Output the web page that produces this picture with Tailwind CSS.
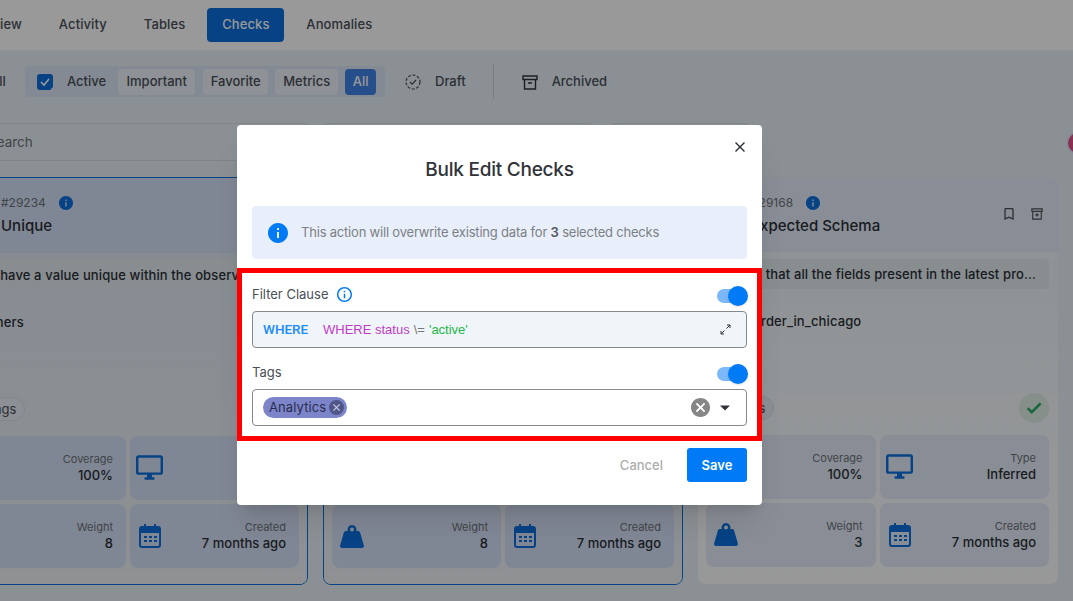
<!doctype html>
<html lang="en">
  <head>
    <meta charset="UTF-8" />
    <title>Bulk Edit Checks</title>
    <script src="https://cdn.jsdelivr.net/npm/@tailwindcss/browser@4"></script>
  </head>
  <body class="relative h-[601px] w-[1073px] overflow-hidden bg-[#e8f1f7] font-['Inter',sans-serif] text-[#2b2f36]">
    <!-- page behind the dialog -->
    <nav class="flex h-[50px] items-start gap-[37px] bg-white pt-2 pl-[24px] text-[13px] font-medium tracking-[0.1px] text-[#4a4f57]">
      <div class="-ml-[62px] flex h-[34px] items-center">Overview</div>
      <div class="flex h-[34px] items-center">Activity</div>
      <div class="flex h-[34px] items-center">Tables</div>
      <div class="-mx-[15px] flex h-[34px] w-[77px] items-center justify-center rounded bg-[#0a6fdc] text-white">Checks</div>
      <div class="flex h-[34px] items-center">Anomalies</div>
    </nav>

    <section class="flex h-[73px] items-center pb-[10px] text-[13px] font-medium text-[#4a4f57]">
      <span class="-ml-[10px] w-[35px]">All</span>
      <div class="flex h-[31px] w-[360px] items-center rounded bg-[#dbe6f5] pl-3">
        <svg class="size-[16px] text-[#0a6fdc]" viewBox="0 0 16 16" fill="currentColor"><path d="M3 0h10a3 3 0 0 1 3 3v10l-3 3H3a3 3 0 0 1-3-3V3a3 3 0 0 1 3-3z" /><path d="m4 8 3 3 5-6" fill="none" stroke="#fff" stroke-width="1.6" /></svg>
        <span class="ml-[14px]">Active</span>
        <span class="ml-[12px] flex h-[26px] w-[77px] items-center justify-center rounded bg-[#edf3fa]">Important</span>
        <span class="ml-[8px] flex h-[26px] w-[65px] items-center justify-center rounded bg-[#edf3fa]">Favorite</span>
        <span class="ml-[7px] flex h-[26px] w-[63px] items-center justify-center rounded bg-[#edf3fa]">Metrics</span>
        <span class="ml-[7px] flex h-[26px] w-[31px] items-center justify-center rounded bg-[#3f82e6] text-white">All</span>
      </div>
      <svg class="ml-[20px] size-[16px]" viewBox="0 0 16 16" fill="none" stroke="#4a4f57" stroke-width="1.2"><circle cx="8" cy="8" r="7" stroke-dasharray="3 1.6" /><path d="m5 8 2.2 2.2L11 6" /></svg>
      <span class="ml-[14px]">Draft</span>
      <div class="ml-[27px] h-[35px] w-px bg-[#c9d2da]"></div>
      <svg class="ml-[28px] size-[16px]" viewBox="0 0 16 16" fill="none" stroke="#30343a" stroke-width="1.4"><path d="M1 2h14v3.5H1zM2.5 5.5V15h11V5.5M6 9h4" /></svg>
      <span class="ml-[14px]">Archived</span>
    </section>

    <section class="flex gap-[17px] pb-[16px] text-[13.5px] text-[#6d7278]">
      <div class="-ml-[52px] flex h-[38px] w-[359px] items-center rounded border border-[#d5dde3] pl-[39px]">Search</div>
      <div class="h-[38px] w-[269px] rounded border border-[#d5dde3]"></div>
      <div class="h-[38px] w-[140px] rounded border border-[#d5dde3]"></div>
    </section>

    <!-- check cards -->
    <main class="-ml-[52px] flex gap-[15px]">
      <article class="h-[408px] w-[360px] shrink-0 overflow-hidden rounded-lg border border-[#0a6fdc]">
        <header class="h-[75px] bg-[#d5e1f7] pt-[16px] pl-[52px]">
          <p class="flex items-center gap-[13px] text-[12px] text-[#6d7278]">#29234
            <svg class="size-[14px] text-[#0a6fdc]" viewBox="2 2 20 20" fill="currentColor"><path d="M12 2C6.48 2 2 6.48 2 12s4.48 10 10 10 10-4.48 10-10S17.52 2 12 2zm1 15h-2v-6h2v6zm0-8h-2V7h2v2z" /></svg>
          </p>
          <h3 class="mt-[3px] text-[15px] font-medium">Unique</h3>
        </header>
        <div class="h-[332px] bg-linear-to-b from-[#e1eaf5] to-[#eef2f6] px-2 pt-[7px]">
          <p class="h-[30px] truncate rounded bg-[#e3ebf1] px-2 text-[13px] leading-[30px] font-medium tracking-[0.12px]">Must have a value unique within the observed data in this set of rows</p>
          <p class="mt-[23px] text-[13px] font-medium tracking-[0.12px]">customers</p>
          <div class="mt-[64px] flex h-[24px] items-center">
            <span class="ml-[1px] rounded-full border border-[#d7e0e8] bg-[#e9eff5] px-2 text-[13px] leading-[22px] text-[#4a4f57]">+2 Tags</span>
          </div>
          <div class="mt-[15px] grid grid-cols-2 gap-[4px]">
            <div class="flex h-[64px] items-center justify-end rounded-lg bg-[#d5e1f7] px-[13px]">
              <div class="mb-[2px] text-right"><p class="text-[11px] leading-[16px] text-[#6d7278]">Coverage</p><p class="text-[13px] leading-[16px] font-medium">100%</p></div>
            </div>
            <div class="flex h-[64px] items-center justify-between rounded-lg bg-[#d5e1f7] pr-[13px] pl-[6px]">
              <svg class="size-[27px] text-[#0a6fdc]" viewBox="1 2 22 20" fill="currentColor"><path d="M21 2H3c-1.100 0-2 .9-2 2v12c0 1.100.9 2 2 2h7v2H8v2h8v-2h-2v-2h7c1.100 0 2-.9 2-2V4c0-1.100-.9-2-2-2zm0 14H3V4h18v12z" /></svg>
              <div class="mb-[2px] text-right"><p class="text-[11px] leading-[16px] text-[#6d7278]">Type</p><p class="text-[13px] leading-[16px] font-medium">Inferred</p></div>
            </div>
            <div class="flex h-[64px] items-center justify-end rounded-lg bg-[#d5e1f7] px-[13px]">
              <div class="mb-[2px] text-right"><p class="text-[11px] leading-[16px] text-[#6d7278]">Weight</p><p class="text-[13px] leading-[16px] font-medium">8</p></div>
            </div>
            <div class="flex h-[64px] items-center justify-between rounded-lg bg-[#d5e1f7] pr-[13px] pl-[9px]">
              <svg class="h-[24px] w-[22px] text-[#0a6fdc]" viewBox="0 0 22 24" fill="currentColor"><path fill-rule="evenodd" d="M5 0h2v2h8V0h2v2h2a3 3 0 0 1 3 3v16a3 3 0 0 1-3 3H3a3 3 0 0 1-3-3V5a3 3 0 0 1 3-3h2zM2 9v12a1 1 0 0 0 1 1h16a1 1 0 0 0 1-1V9zm3 3h3v2H5zm5 0h3v2h-3zm5 0h3v2h-3zM5 16h3v2H5zm5 0h3v2h-3zm5 0h3v2h-3z" /></svg>
              <div class="mb-[2px] text-right"><p class="text-[11px] leading-[16px] text-[#6d7278]">Created</p><p class="text-[13px] leading-[16px] font-medium">7 months ago</p></div>
            </div>
          </div>
        </div>
      </article>

      <article class="h-[408px] w-[360px] shrink-0 overflow-hidden rounded-lg border border-[#0a6fdc]">
        <div class="h-[75px] bg-[#d5e1f7]"></div>
        <div class="h-[332px] bg-linear-to-b from-[#e1eaf5] to-[#eef2f6] px-2 pt-[183px]">
          <div class="grid grid-cols-2 gap-[4px]">
            <div class="h-[64px] rounded-lg bg-[#d5e1f7]"></div>
            <div class="h-[64px] rounded-lg bg-[#d5e1f7]"></div>
            <div class="flex h-[64px] items-center justify-between rounded-lg bg-[#d5e1f7] pr-[13px] pl-[8px]">
              <svg class="h-[23px] w-[24px] text-[#0a6fdc]" viewBox="0 0 24 23" fill="currentColor"><path fill-rule="evenodd" d="M12 0a4.500 4.500 0 0 1 4.200 6H18c1 0 1.800.6 2.100 1.500l3.800 13c.4 1.300-.5 2.500-1.900 2.500H2c-1.400 0-2.300-1.200-1.900-2.500l3.800-13C4.200 6.600 5 6 6 6h1.800A4.500 4.500 0 0 1 12 0zm0 2.500a2 2 0 1 0 0 4 2 2 0 0 0 0-4z" /></svg>
              <div class="mb-[2px] text-right"><p class="text-[11px] leading-[16px] text-[#6d7278]">Weight</p><p class="text-[13px] leading-[16px] font-medium">8</p></div>
            </div>
            <div class="flex h-[64px] items-center justify-between rounded-lg bg-[#d5e1f7] pr-[13px] pl-[9px]">
              <svg class="h-[24px] w-[22px] text-[#0a6fdc]" viewBox="0 0 22 24" fill="currentColor"><path fill-rule="evenodd" d="M5 0h2v2h8V0h2v2h2a3 3 0 0 1 3 3v16a3 3 0 0 1-3 3H3a3 3 0 0 1-3-3V5a3 3 0 0 1 3-3h2zM2 9v12a1 1 0 0 0 1 1h16a1 1 0 0 0 1-1V9zm3 3h3v2H5zm5 0h3v2h-3zm5 0h3v2h-3zM5 16h3v2H5zm5 0h3v2h-3zm5 0h3v2h-3z" /></svg>
              <div class="mb-[2px] text-right"><p class="text-[11px] leading-[16px] text-[#6d7278]">Created</p><p class="text-[13px] leading-[16px] font-medium">7 months ago</p></div>
            </div>
          </div>
        </div>
      </article>

      <article class="h-[407px] w-[360px] shrink-0 overflow-hidden rounded-lg">
        <header class="relative h-[75px] bg-[#e4ecf8] pt-[17px] pl-[53px]">
          <p class="flex items-center gap-[13px] text-[12px] text-[#6d7278]">#29168
            <svg class="size-[14px] text-[#0a6fdc]" viewBox="2 2 20 20" fill="currentColor"><path d="M12 2C6.48 2 2 6.48 2 12s4.48 10 10 10 10-4.48 10-10S17.52 2 12 2zm1 15h-2v-6h2v6zm0-8h-2V7h2v2z" /></svg>
          </p>
          <h3 class="mt-[3px] text-[15px] font-medium">Expected Schema</h3>
          <div class="absolute top-[31px] right-[15px] flex items-center gap-[17px] text-[#4a4f57]">
            <svg class="h-[12px] w-[10px]" viewBox="5 3 14 18" fill="currentColor"><path d="M17 3H7c-1.100 0-2 .9-2 2v16l7-3 7 3V5c0-1.100-.9-2-2-2zm0 15-5-2.180L7 18V5h10v13z" /></svg>
            <svg class="size-[12px]" viewBox="0 0 14 14" fill="none" stroke="currentColor" stroke-width="1.300"><path d="M1 1h12v3H1zM2 4v9h10V4M7 6v4M5 8h4" /></svg>
          </div>
        </header>
        <div class="h-[332px] bg-linear-to-b from-[#eef5fa] to-[#fdfeff] pt-[7px] pr-[9px] pl-2">
          <p class="h-[30px] truncate rounded bg-[#e3ebf1] pr-[11px] pl-2 text-[13px] leading-[30px] font-medium tracking-[0.12px]">Asserts that all the fields present in the latest profile match</p>
          <p class="mt-[23px] px-2 text-[13px] font-medium tracking-[0.12px]">sales_order_in_chicago</p>
          <div class="mt-[61px] flex h-[31px] items-center justify-between">
            <span class="ml-[1px] rounded-full border border-[#d7e0e8] bg-[#e9eff5] px-2 text-[13px] leading-[22px] text-[#4a4f57]">+2 Tags</span>
            <span class="flex size-[30px] items-center justify-center rounded-full bg-[#dfeee6] text-[#27ae60]">
              <svg class="size-[18px]" viewBox="0 0 24 24" fill="currentColor"><path d="M9 16.170 4.830 12l-1.420 1.410L9 19 21 7l-1.410-1.410z" stroke="currentColor" stroke-width="1.500" /></svg>
            </span>
          </div>
          <div class="mt-[11px] grid grid-cols-2 gap-[4px]">
            <div class="flex h-[64px] items-center justify-end rounded-lg bg-[#e4ecf8] px-[13px]">
              <div class="mb-[2px] text-right"><p class="text-[11px] leading-[16px] text-[#6d7278]">Coverage</p><p class="text-[13px] leading-[16px] font-medium">100%</p></div>
            </div>
            <div class="flex h-[64px] items-center justify-between rounded-lg bg-[#e4ecf8] pr-[13px] pl-[6px]">
              <svg class="size-[27px] text-[#0a6fdc]" viewBox="1 2 22 20" fill="currentColor"><path d="M21 2H3c-1.100 0-2 .9-2 2v12c0 1.100.9 2 2 2h7v2H8v2h8v-2h-2v-2h7c1.100 0 2-.9 2-2V4c0-1.100-.9-2-2-2zm0 14H3V4h18v12z" /></svg>
              <div class="mb-[2px] text-right"><p class="text-[11px] leading-[16px] text-[#6d7278]">Type</p><p class="text-[13px] leading-[16px] font-medium">Inferred</p></div>
            </div>
            <div class="flex h-[64px] items-center justify-between rounded-lg bg-[#e4ecf8] pr-[13px] pl-[8px]">
              <svg class="h-[23px] w-[24px] text-[#0a6fdc]" viewBox="0 0 24 23" fill="currentColor"><path fill-rule="evenodd" d="M12 0a4.500 4.500 0 0 1 4.200 6H18c1 0 1.800.6 2.100 1.500l3.800 13c.4 1.300-.5 2.500-1.900 2.500H2c-1.400 0-2.300-1.200-1.900-2.500l3.800-13C4.200 6.600 5 6 6 6h1.800A4.500 4.500 0 0 1 12 0zm0 2.500a2 2 0 1 0 0 4 2 2 0 0 0 0-4z" /></svg>
              <div class="mb-[2px] text-right"><p class="text-[11px] leading-[16px] text-[#6d7278]">Weight</p><p class="text-[13px] leading-[16px] font-medium">3</p></div>
            </div>
            <div class="flex h-[64px] items-center justify-between rounded-lg bg-[#e4ecf8] pr-[13px] pl-[9px]">
              <svg class="h-[24px] w-[22px] text-[#0a6fdc]" viewBox="0 0 22 24" fill="currentColor"><path fill-rule="evenodd" d="M5 0h2v2h8V0h2v2h2a3 3 0 0 1 3 3v16a3 3 0 0 1-3 3H3a3 3 0 0 1-3-3V5a3 3 0 0 1 3-3h2zM2 9v12a1 1 0 0 0 1 1h16a1 1 0 0 0 1-1V9zm3 3h3v2H5zm5 0h3v2h-3zm5 0h3v2h-3zM5 16h3v2H5zm5 0h3v2h-3zm5 0h3v2h-3z" /></svg>
              <div class="mb-[2px] text-right"><p class="text-[11px] leading-[16px] text-[#6d7278]">Created</p><p class="text-[13px] leading-[16px] font-medium">7 months ago</p></div>
            </div>
          </div>
        </div>
      </article>
    </main>

    <div class="absolute top-[133px] left-[1068px] size-[20px] rounded-full bg-[#e0508c] ring-2 ring-[#dbe6f5]"></div>

    <!-- dialog -->
    <div class="absolute inset-0 bg-black/40 pt-[125px] pl-[237px]">
      <div class="relative h-[380px] w-[525px] rounded bg-white px-[15px] shadow-xl">
        <button class="absolute top-[17px] right-[17px] text-[#30343a]">
          <svg class="size-[10px]" viewBox="5 5 14 14" fill="currentColor"><path d="M19 6.410 17.590 5 12 10.590 6.410 5 5 6.410 10.590 12 5 17.590 6.410 19 12 13.410 17.590 19 19 17.590 13.410 12z" /></svg>
        </button>
        <h2 class="pt-[33px] text-center text-[19px] leading-[24px] font-medium tracking-[-0.25px] text-[#30343a]">Bulk Edit Checks</h2>
        <div class="mt-[24px] flex h-[53px] items-center gap-[13px] rounded bg-[#e8effa] pl-[16px] text-[13px] tracking-[-0.2px] text-[#7c7f85]">
          <svg class="size-[20px] text-[#007bf5]" viewBox="2 2 20 20" fill="currentColor"><path d="M12 2C6.480 2 2 6.480 2 12s4.480 10 10 10 10-4.480 10-10S17.520 2 12 2zm1 15h-2v-6h2v6zm0-8h-2V7h2v2z" /></svg>
          <p>This action will overwrite existing data for <b class="font-semibold text-[#555960]">3</b> selected checks</p>
        </div>

        <div class="mt-[24px] flex h-[24px] items-center justify-between text-[13px] text-[#4a4f57]">
          <p class="flex items-center gap-[8px]">Filter Clause
            <svg class="size-[15px] -translate-y-px text-[#007bf5]" viewBox="2 2 20 20" fill="currentColor"><path d="M11 7h2v2h-2zm0 4h2v6h-2zm1-9C6.480 2 2 6.480 2 12s4.480 10 10 10 10-4.480 10-10S17.520 2 12 2zm0 18c-4.410 0-8-3.590-8-8s3.590-8 8-8 8 3.590 8 8-3.590 8-8 8z" /></svg>
          </p>
          <span class="relative block h-[14px] w-[30px] translate-y-[1px] rounded-full bg-[#7ab8fa]">
            <span class="absolute -top-[3px] -right-px size-[20px] rounded-full bg-[#007bf5] shadow"></span>
          </span>
        </div>
        <div class="mt-[4px] flex h-[37px] items-center justify-between rounded border border-[#85888d] bg-[#f0f5f9] pr-[15px] pl-[10px] font-['Liberation_Sans',sans-serif] text-[13px]">
          <p class="flex items-center">
            <span class="w-[60px] font-['Roboto',sans-serif] text-[13.5px] font-medium text-[#1a8cff]">WHERE</span>
            <span class="text-[#c03cc8]">WHERE status</span>
            <span class="mx-[4px] text-[#777]">\=</span>
            <span class="text-[#22b84a]">'active'</span>
          </p>
          <svg class="size-[11px] text-[#30343a]" viewBox="0 0 11 11" fill="none" stroke="currentColor" stroke-width="1"><path d="M7 1h3v3M10 1 6.500 4.500M4 10H1V7M1 10l3.500-3.500" /></svg>
        </div>

        <div class="mt-[13px] flex h-[24px] items-center justify-between text-[13px] text-[#4a4f57]">
          <p>Tags</p>
          <span class="relative block h-[14px] w-[30px] translate-y-[1px] rounded-full bg-[#7ab8fa]">
            <span class="absolute -top-[3px] -right-px size-[20px] rounded-full bg-[#007bf5] shadow"></span>
          </span>
        </div>
        <div class="mt-[4px] flex h-[37px] items-center justify-between rounded border border-[#85888d] pr-[14px] pl-[10px]">
          <span class="flex h-[21px] items-center gap-[3px] rounded-full bg-[#7c85c9] pr-[3px] pl-[6px] text-[13px] tracking-[0.1px] text-[#2a2e4e]">Analytics
            <span class="flex size-[15px] items-center justify-center rounded-full bg-[#4f5688] text-[#d6d9ee]">
              <svg class="size-[7px]" viewBox="5 5 14 14" fill="currentColor"><path d="M19 6.410 17.590 5 12 10.590 6.410 5 5 6.410 10.590 12 5 17.590 6.410 19 12 13.410 17.590 19 19 17.590 13.410 12z" /></svg>
            </span>
          </span>
          <span class="flex items-center gap-[8px]">
            <svg class="size-[19px] text-[#868686]" viewBox="2 2 20 20" fill="currentColor"><path d="M12 2C6.470 2 2 6.470 2 12s4.470 10 10 10 10-4.470 10-10S17.530 2 12 2zm5 13.590L15.590 17 12 13.410 8.410 17 7 15.590 10.590 12 7 8.410 8.410 7 12 10.590 15.590 7 17 8.410 13.410 12 17 15.590z" /></svg>
            <svg class="size-[14px] text-[#30343a]" viewBox="5 8 14 9" fill="currentColor"><path d="M7 10l5 5 5-5z" /></svg>
          </span>
        </div>

        <div class="mt-[22px] flex items-center justify-end gap-[24px]">
          <button class="pt-px text-[13px] font-medium text-[#adadad]">Cancel</button>
          <button class="h-[34px] w-[60px] rounded-[3px] bg-[#007bf5] pt-px text-[13px] font-semibold text-white">Save</button>
        </div>

        <div class="pointer-events-none absolute top-[143px] left-0 h-[173px] w-[525px] border-[5px] border-[#ff0000]"></div>
      </div>
    </div>
  </body>
</html>
